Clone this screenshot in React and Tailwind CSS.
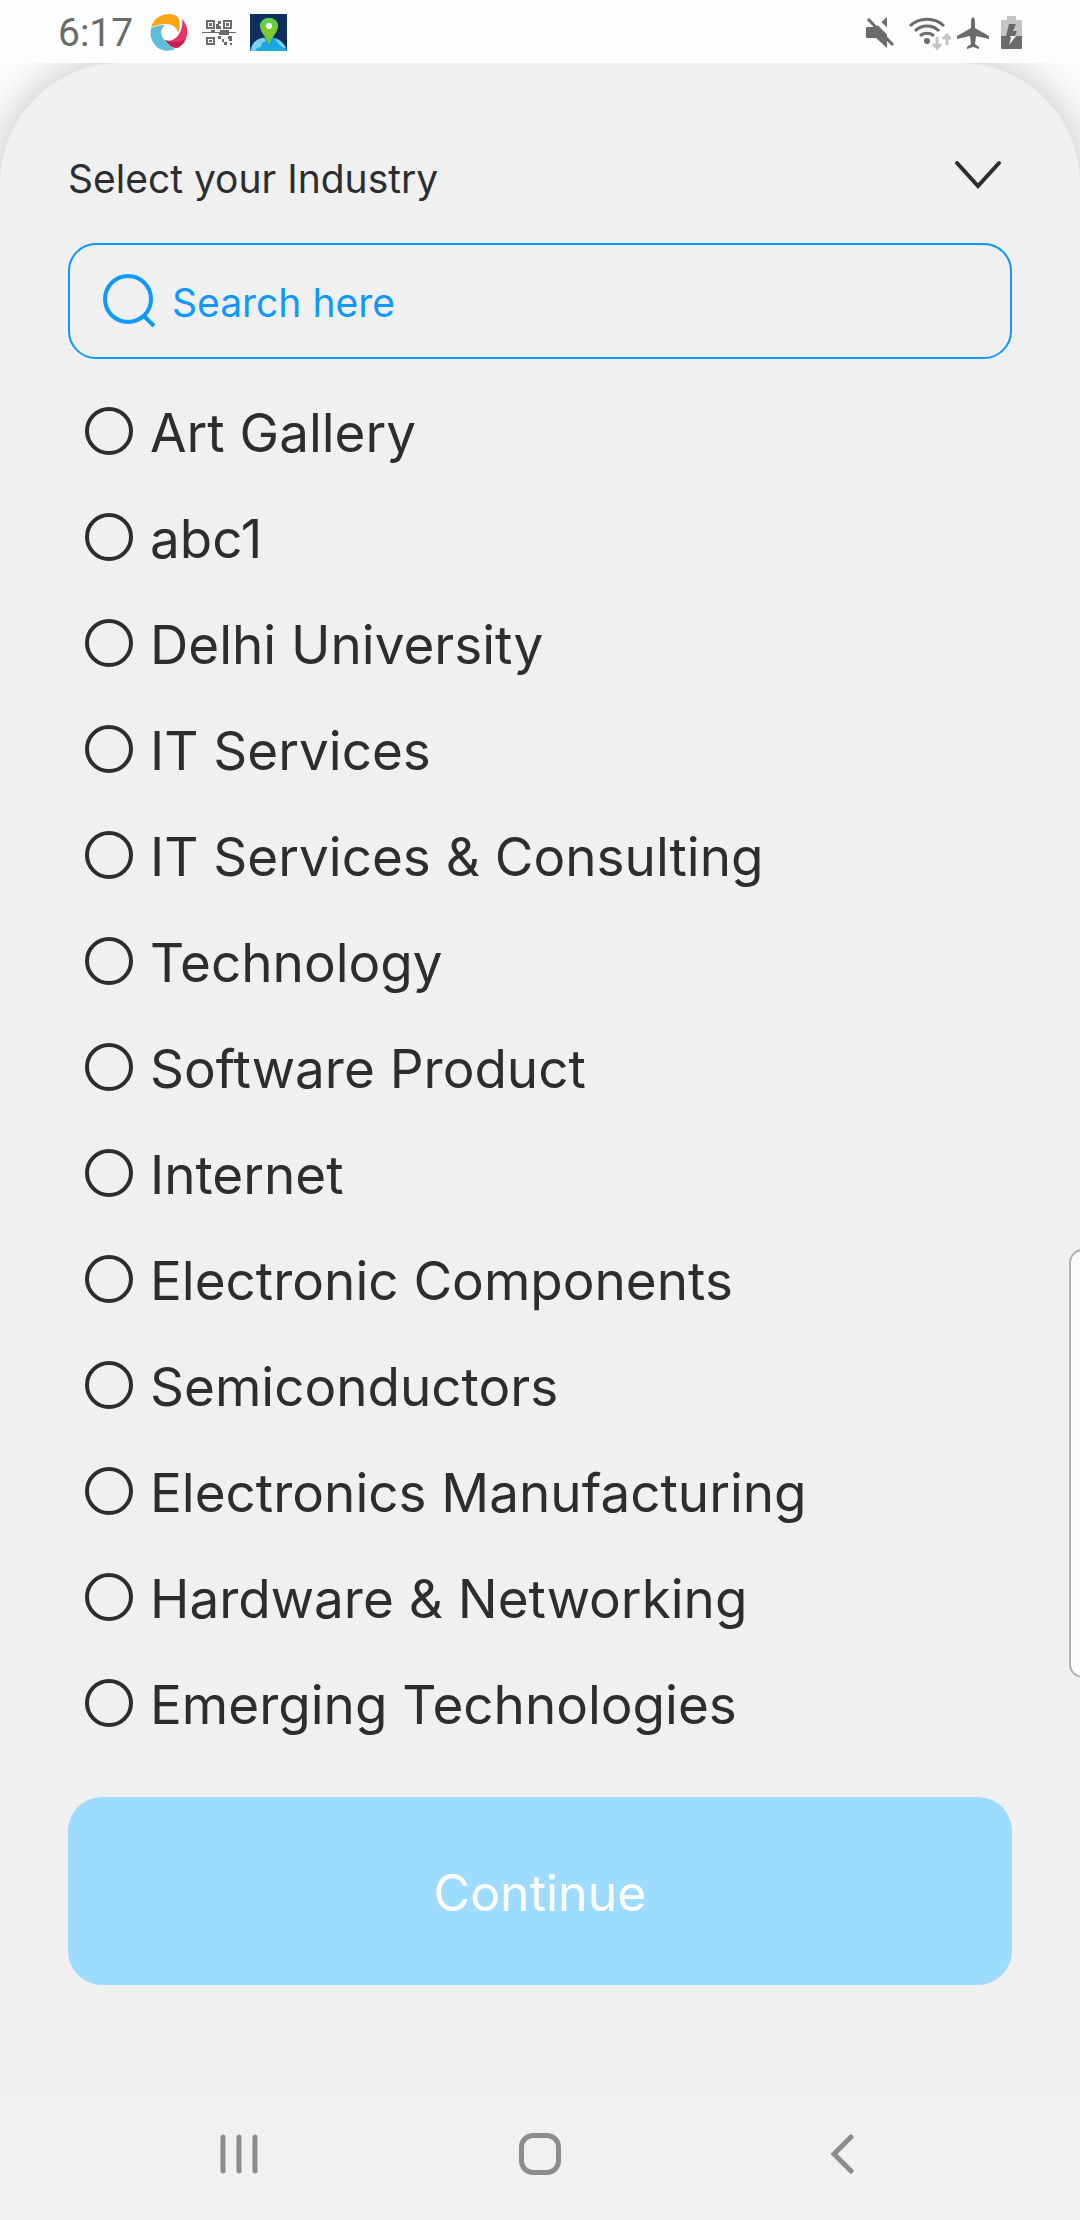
import { useState } from "react";

const industries = [
  "Art Gallery",
  "abc1",
  "Delhi University",
  "IT Services",
  "IT Services & Consulting",
  "Technology",
  "Software Product",
  "Internet",
  "Electronic Components",
  "Semiconductors",
  "Electronics Manufacturing",
  "Hardware & Networking",
  "Emerging Technologies",
];

function SwirlIcon() {
  return (
    <svg className="size-[37px]" viewBox="0 0 37 37" aria-hidden="true">
      <path d="M1 14C3 5 11 0 19 0c5 0 8 2 10 5 1 4 1 9-1 14-1-6-6-9-12-9-6 0-11 1-15 4z" fill="#fba713" />
      <path d="M32 5c4 4 6 10 5 16-1 7-5 11-10 13-4 0-9-3-12-8 6 2 11-1 14-6 3-5 4-10 3-15z" fill="#e8336a" />
      <path d="M15 26c3 5 8 8 12 8 4-2 7-5 8-9-6 4-13 4-20 1z" fill="#c91f4c" />
      <path d="M1 15c3-3 8-4 14-4-4 3-5 8-2 13 3 5 7 8 12 11-4 2-9 2-13 1C4 33-1 24 1 15z" fill="#5dbdd6" />
    </svg>
  );
}

function QrIcon() {
  return (
    <svg className="h-[27px] w-[34px]" viewBox="0 0 34 27" fill="#6a6c6a" aria-hidden="true">
      <path fillRule="evenodd" d="M4 1h9v9H4zM6 3v5h5V3zM21 1h9v9h-9zM23 3v5h5V3zM4 18h9v8H4zM6 20v4h5v-4z" />
      <path d="M7 4h3v3H7zM24 4h3v3h-3zM7 21h3v2H7zM14 5h2V2h3v3h-2v2h2v3h-5zM0 13h9v-2h4v2h5v-2h9v2h7v1H27v2H17v-2H0zM16 17h3v3h-3zM20 20h2v3h-2zM22 23h3v3h-3zM26 17h4v5h-3v-2h-1zM28 24h2v2h-2z" />
    </svg>
  );
}

function MapPinIcon() {
  return (
    <svg className="size-[37px]" viewBox="0 0 37 37" aria-hidden="true">
      <rect width="37" height="37" fill="#0e2f5e" />
      <path d="M0 37c2-9 9-14 18.500-14S35 28 37 37z" fill="#1ba7e6" />
      <path d="M2 32c2-5 7-8 12-8l2 3-4 2-1 4-4 1-2 3H1zM25 25c5 1 9 5 11 9l-4-1-4-4z" fill="#7fd0f2" />
      <path d="M19 31C17 23 10 19 10 12a9 8 0 0 1 18 0c0 7-7 11-9 19z" fill="#7ccb2a" />
      <path d="M10 12a9 8 0 0 1 18 0z" fill="#5fd04b" />
      <circle cx="19" cy="12" r="3" fill="#fff" />
    </svg>
  );
}

function MuteIcon() {
  return (
    <svg className="h-[33px] w-[30px]" viewBox="0 0 30 33" aria-hidden="true">
      <path d="M1 11h9L21 1v31L10 22H1q-1 0-1-1v-9q0-1 1-1z" fill="#6a6c6a" />
      <path d="M5-1 32 26" stroke="#fcfdfe" strokeWidth="5" />
      <path d="M2 3 27 29" stroke="#6a6c6a" strokeWidth="3" />
    </svg>
  );
}

function WifiIcon() {
  return (
    <svg className="h-[34px] w-[42px]" viewBox="0 0 42 34" fill="none" aria-hidden="true">
      <g stroke="#6a6c6a" strokeWidth="3">
        <path d="M1 10a25 25 0 0 1 34 0M6 15a17 17 0 0 1 24 0M11 20a10 10 0 0 1 14 0" />
      </g>
      <circle cx="18" cy="25" r="3" fill="#6a6c6a" />
      <path d="M28 21v10M24 28l4 4 4-4M38 29V20M34 23l4-4 4 4" stroke="#c3c4c3" strokeWidth="3" />
    </svg>
  );
}

function PlaneIcon() {
  return (
    <svg className="h-[32px] w-[32px]" viewBox="0 0 32 32" fill="#6a6c6a" aria-hidden="true">
      <path d="M16 0q2 1 2 4v7l14 8v3l-13-3-1 8 4 3v2l-6-2-6 2v-2l4-3-1-8L0 22v-3l14-8V4q0-3 2-4z" />
    </svg>
  );
}

function BatteryIcon() {
  return (
    <svg className="h-[33px] w-[21px]" viewBox="0 0 21 33" aria-hidden="true">
      <path d="M6 0h9v4h5q1 0 1 1v15H0V5q0-1 1-1h5z" fill="#c3c4c3" />
      <path d="M0 20h21v12q0 1-1 1H1q-1 0-1-1z" fill="#6a6c6a" />
      <path d="M8 8h7l-3 7h4l-2 5H5z" fill="#6a6c6a" />
      <path d="M9 20h6L8 29l2-7z" fill="#fff" />
    </svg>
  );
}

function StatusBar() {
  return (
    <header className="relative z-10 flex h-[63px] items-center justify-between bg-[#fcfdfe] px-[58px] pt-[2px]">
      <div className="flex items-center">
        <span className="w-[92px] pt-[2px] font-[Roboto,sans-serif] text-[39px] leading-none text-[#6a6c6a]">6:17</span>
        <SwirlIcon />
        <span className="w-[15px]" />
        <QrIcon />
        <span className="w-[14px]" />
        <MapPinIcon />
      </div>
      <div className="flex items-center">
        <MuteIcon />
        <span className="w-[13px]" />
        <WifiIcon />
        <span className="w-[6px]" />
        <PlaneIcon />
        <span className="w-[12px]" />
        <BatteryIcon />
      </div>
    </header>
  );
}

function SearchIcon() {
  return (
    <svg className="size-[54px] shrink-0" viewBox="0 0 54 54" fill="none" stroke="#0d99ff" strokeWidth="4" aria-hidden="true">
      <circle cx="26" cy="25" r="23" />
      <path d="M41 41l11 11" />
    </svg>
  );
}

function NavBar() {
  return (
    <nav className="flex h-[127px] bg-[#f1f1f1] px-[88px] pb-[6px]" aria-label="System">
      <button type="button" aria-label="Recent apps" className="flex flex-1 items-center justify-center">
        <svg className="h-[42px] w-[38px]" viewBox="0 0 38 42" stroke="#8c8c8c" strokeWidth="5" strokeLinecap="round">
          <path d="M3 4v34M19 4v34M35 4v34" />
        </svg>
      </button>
      <button type="button" aria-label="Home" className="flex flex-1 items-center justify-center">
        <span className="size-[42px] rounded-[14px] border-[5px] border-[#8c8c8c]" />
      </button>
      <button type="button" aria-label="Back" className="flex flex-1 items-center justify-center">
        <svg className="h-[42px] w-[26px]" viewBox="0 0 26 42" fill="none" stroke="#8c8c8c" strokeWidth="5" strokeLinecap="round">
          <path d="M23 4 6 21l17 17" />
        </svg>
      </button>
    </nav>
  );
}

export default function App() {
  const [selected, setSelected] = useState("");
  const [query, setQuery] = useState("");
  const shown = industries.filter((name) => name.toLowerCase().includes(query.toLowerCase()));

  return (
    <div className="relative flex min-h-screen flex-col overflow-hidden bg-[#fcfdfe] font-[Inter,sans-serif] text-[#2c2d2e]">
      <StatusBar />
      <main className="flex flex-1 flex-col rounded-t-[120px] bg-[#f0f0f0] px-[68px] shadow-[0_0_50px_rgba(0,0,0,0.24)]">
        <div className="flex items-center justify-between pt-[90px] pr-[10px] pb-[38px]">
          <h1 id="industry-title" className="text-[39px] leading-[52px]">Select your Industry</h1>
          <button type="button" aria-label="Collapse list" className="pb-[8px]">
            <svg className="h-[30px] w-[48px]" viewBox="0 0 48 30" fill="none" stroke="#2c2d2e" strokeWidth="4" strokeLinecap="round">
              <path d="M3 3l21 23L45 3" />
            </svg>
          </button>
        </div>
        <div className="flex h-[116px] items-center gap-[16px] rounded-[28px] border-2 border-[#0d99ff] px-[32px]">
          <SearchIcon />
          <input
            type="text"
            aria-label="Search industries"
            value={query}
            onChange={(e) => setQuery(e.target.value)}
            placeholder="Search here"
            className="min-w-0 flex-1 bg-transparent pt-[4px] text-[39px] leading-[52px] text-[#0d99ff] outline-none placeholder:text-[#0d99ff]"
          />
        </div>
        <div role="radiogroup" aria-labelledby="industry-title" className="pt-[19px] pl-[17px]">
          {shown.map((name) => (
            <label key={name} className="flex h-[106px] items-center gap-[17px] text-[53px] leading-[64px]">
              <input
                type="radio"
                name="industry"
                checked={selected === name}
                onChange={() => setSelected(name)}
                className="size-[48px] shrink-0 appearance-none rounded-full border-4 border-[#2c2d2e] checked:border-[14px]"
              />
              <span className="pt-[4px]">{name}</span>
            </label>
          ))}
        </div>
        <button type="button" className="mt-[41px] h-[188px] rounded-[34px] bg-[#9ddbff] pt-[4px] text-[50px] leading-[64px] text-white">
          Continue
        </button>
      </main>
      <NavBar />
      <div className="absolute top-[1249px] -right-[4px] h-[429px] w-[15px] rounded-l-[14px] border-2 border-[#b0b0b0] bg-[#fbfbfb]" />
    </div>
  );
}
